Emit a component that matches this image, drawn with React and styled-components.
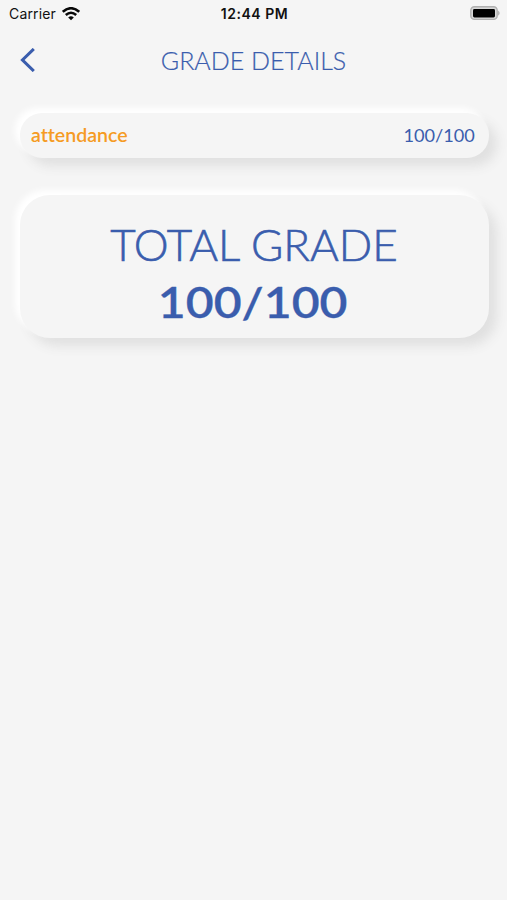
import React from "react";
import styled, { createGlobalStyle } from "styled-components";

const GlobalStyle = createGlobalStyle`
  * { box-sizing: border-box; }
  body { margin: 0; background: #f5f5f5; }
`;

const Screen = styled.main`
  min-height: 900px;
  background: #f5f5f5;
  color: #3a5dad;
  font-family: Lato, sans-serif;
  font-variant-ligatures: none;
  white-space: nowrap;
  overflow: hidden;
`;

const StatusBar = styled.header`
  display: grid;
  grid-template-columns: 1fr auto 1fr;
  align-items: center;
  height: 28px;
  padding: 0 6px 0 8px;
  color: #111;
  font-family: Inter, sans-serif;
  font-size: 14px;
  line-height: 28px;
`;

const Carrier = styled.div`
  display: flex;
  align-items: center;
  gap: 6px;
  padding-left: 1px;
  letter-spacing: 0.15px;
`;

const Clock = styled.time`
  font-weight: 600;
  letter-spacing: 0.55px;
`;

const BatteryIcon = styled.svg`
  justify-self: end;
  display: block;
  margin-top: -1px;
`;

const NavBar = styled.nav`
  display: grid;
  grid-template-columns: 56px 1fr 56px;
  align-items: center;
  height: 64px;
`;

const BackButton = styled.button`
  display: flex;
  padding: 0 0 0 20px;
  border: 0;
  background: none;
  color: inherit;
`;

const Title = styled.h1`
  margin: 0 0 1px;
  text-align: center;
  font-size: 25px;
  line-height: 32px;
  font-weight: 300;
  -webkit-text-stroke: 0.2px currentColor;
`;

const Content = styled.section`
  display: flex;
  flex-direction: column;
  gap: 37px;
  padding: 21px 18px 0 20px;
`;

const Card = styled.article`
  background: #f5f5f5;
  border-radius: ${(p) => p.$radius}px;
  box-shadow: -5px -5px 6px #fff, 8px 8px 12px #e0e0e0;
`;

const GradeRow = styled(Card)`
  display: flex;
  align-items: center;
  justify-content: space-between;
  height: 45px;
  padding: 0 14px 0 11px;
`;

const Subject = styled.span`
  margin-top: -1px;
  color: #f59b23;
  font-size: 18.5px;
  font-weight: 600;
  transform: scaleX(1.055);
  transform-origin: left;
`;

const Score = styled.span`
  font-size: 16.5px;
  transform: scaleX(1.1);
  transform-origin: right;
`;

const TotalCard = styled(Card)`
  display: flex;
  flex-direction: column;
  align-items: center;
  height: 143px;
  padding: 22px 2px 0 0;
`;

const TotalLabel = styled.div`
  font-size: 42.5px;
  line-height: 56px;
  font-weight: 300;
  transform: scaleX(1.035);
  -webkit-text-stroke: 0.6px currentColor;
`;

const TotalScore = styled.div`
  padding-right: 1px;
  font-size: 43px;
  line-height: 57px;
  font-weight: 600;
  transform: scaleX(1.12);
  -webkit-text-stroke: 0.3px currentColor;
`;

function WifiIcon() {
  return (
    <svg width="18" height="14" viewBox="0 0 18 14" fill="none" stroke="#080808" strokeWidth="2.6">
      <path d="M0.8 4.8Q9-2.3 17.2 4.8M3.8 8Q9 3.5 14.2 8" />
      <path d="M6.2 10.4Q9 8.2 11.8 10.4L9 13.3Z" fill="#080808" stroke="none" />
    </svg>
  );
}

export default function App() {
  return (
    <Screen>
      <GlobalStyle />
      <StatusBar>
        <Carrier>Carrier <WifiIcon /></Carrier>
        <Clock>12:44 PM</Clock>
        <BatteryIcon width="31" height="15" viewBox="0 0 31 15">
          <rect x="0.8" y="0.8" width="26.4" height="12.6" rx="3.6" fill="#d8d8d8" stroke="#b0b0b0" strokeWidth="1.4" />
          <rect x="3" y="3" width="22" height="8.4" rx="1.4" fill="#000" />
          <path d="M28.2 4.5Q31 7.1 28.2 9.7Z" fill="#aaa" />
        </BatteryIcon>
      </StatusBar>
      <NavBar>
        <BackButton aria-label="Back">
          <svg width="16" height="24" viewBox="0 0 16 24" fill="none" stroke="currentColor" strokeWidth="3.1">
            <path d="M13.8 1L2.5 12L13.8 23" />
          </svg>
        </BackButton>
        <Title>GRADE DETAILS</Title>
      </NavBar>
      <Content>
        <GradeRow $radius={22}>
          <Subject>attendance</Subject>
          <Score>100/100</Score>
        </GradeRow>
        <TotalCard $radius={30}>
          <TotalLabel>TOTAL GRADE</TotalLabel>
          <TotalScore>100/100</TotalScore>
        </TotalCard>
      </Content>
    </Screen>
  );
}
